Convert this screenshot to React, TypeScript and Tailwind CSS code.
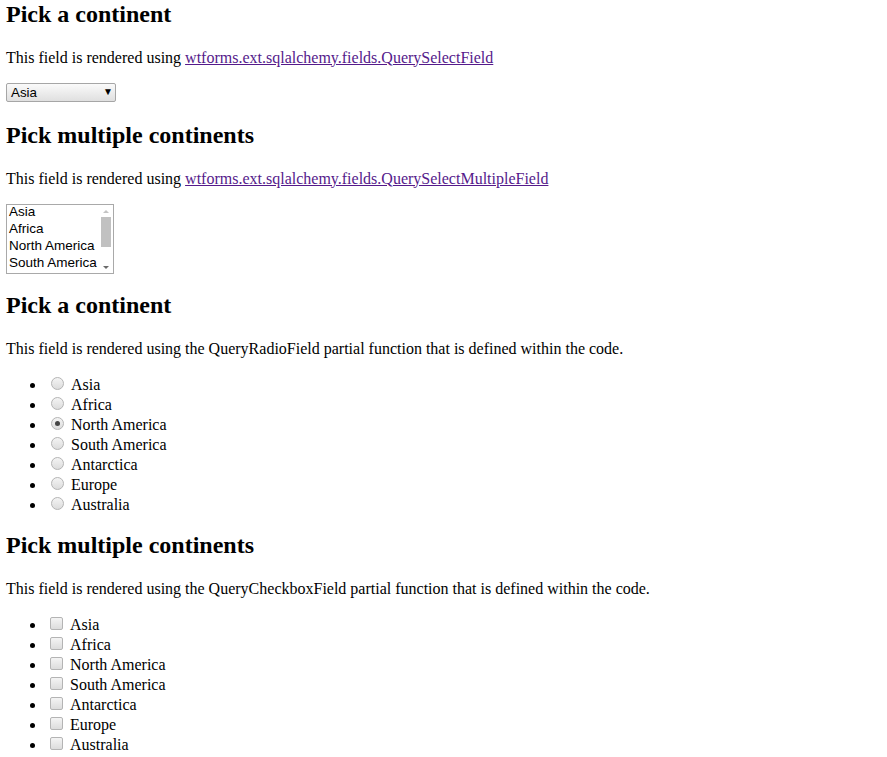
import React from "react";

const continents = ["Asia", "Africa", "North America", "South America", "Antarctica", "Europe", "Australia"];

function Radio({ checked }: { checked?: boolean }) {
  return (
    <span className="relative inline-block w-[13px] h-[13px] ml-[5px] mr-[7px] align-[0px] rounded-full border border-[#b4b4b4] bg-gradient-to-b from-[#f4f4f4] to-[#dcdcdc]">
      {checked && (
        <span className="absolute left-[3px] top-[3px] w-[5px] h-[5px] rounded-full bg-[#454545]" />
      )}
    </span>
  );
}

function Checkbox() {
  return (
    <span className="inline-block w-[13px] h-[13px] ml-[4px] mr-[7px] align-[0px] rounded-[2px] border border-[#b4b4b4] bg-gradient-to-b from-[#f4f4f4] to-[#dcdcdc]" />
  );
}

export default function App() {
  const link = "text-[#551a8b] underline";
  return (
    <div className="px-[6px] pt-[1px] pb-2 text-black bg-white font-['Liberation_Serif',serif] text-[16px]">
      <h2 className="text-[24px] font-bold leading-[27.6px]">Pick a continent</h2>
      <p className="mt-[20px] leading-[18.4px]">
        This field is rendered using <a className={link} href="#">wtforms.ext.sqlalchemy.fields.QuerySelectField</a>
      </p>
      <div className="relative w-[110px] h-[19px] mt-[16px] rounded-[2px] border border-[#a6a6a6] bg-gradient-to-b from-[#fafafa] to-[#e0e0e0] font-['Liberation_Sans',sans-serif] text-[13.33px] leading-[17px] pl-[4px]">
        Asia
        <span className="absolute right-[2px] top-[0px] text-[10px] leading-[16px]">▼</span>
      </div>

      <h2 className="mt-[20px] text-[24px] font-bold leading-[27.6px]">Pick multiple continents</h2>
      <p className="mt-[20px] leading-[18.4px]">
        This field is rendered using <a className={link} href="#">wtforms.ext.sqlalchemy.fields.QuerySelectMultipleField</a>
      </p>
      <div className="flex w-[108px] h-[70px] mt-[16px] border border-[#a9a9a9] bg-white font-['Liberation_Sans',sans-serif] text-[13.5px] leading-[15px]">
        <div className="flex-1 pl-[2px] -mt-[1px] overflow-hidden whitespace-nowrap">
          {continents.slice(0, 4).map((c) => (
            <div key={c} className="h-[17px]">{c}</div>
          ))}
        </div>
        <div className="w-[14px] flex flex-col items-center bg-white">
          <svg width="14" height="12" viewBox="0 0 14 12"><path d="M4 8 L7 5 L10 8 Z" fill="#c4c4c4" /></svg>
          <div className="w-[10px] h-[30px] bg-[#c1c1c1]" />
          <div className="flex-1" />
          <svg width="14" height="12" viewBox="0 0 14 12"><path d="M4 5 L10 5 L7 8 Z" fill="#6a6a6a" /></svg>
        </div>
      </div>

      <h2 className="mt-[18px] text-[24px] font-bold leading-[27.6px]">Pick a continent</h2>
      <p className="mt-[20px] leading-[18.4px]">
        This field is rendered using the QueryRadioField partial function that is defined within the code.
      </p>
      <ul className="mt-[17px] pl-10 list-disc">
        {continents.map((c) => (
          <li key={c} className="h-5 leading-5">
            <Radio checked={c === "North America"} />
            {c}
          </li>
        ))}
      </ul>

      <h2 className="mt-[17px] text-[24px] font-bold leading-[27.6px]">Pick multiple continents</h2>
      <p className="mt-[20px] leading-[18.4px]">
        This field is rendered using the QueryCheckboxField partial function that is defined within the code.
      </p>
      <ul className="mt-[17px] pl-10 list-disc">
        {continents.map((c) => (
          <li key={c} className="h-5 leading-5">
            <Checkbox />
            {c}
          </li>
        ))}
      </ul>
    </div>
  );
}
